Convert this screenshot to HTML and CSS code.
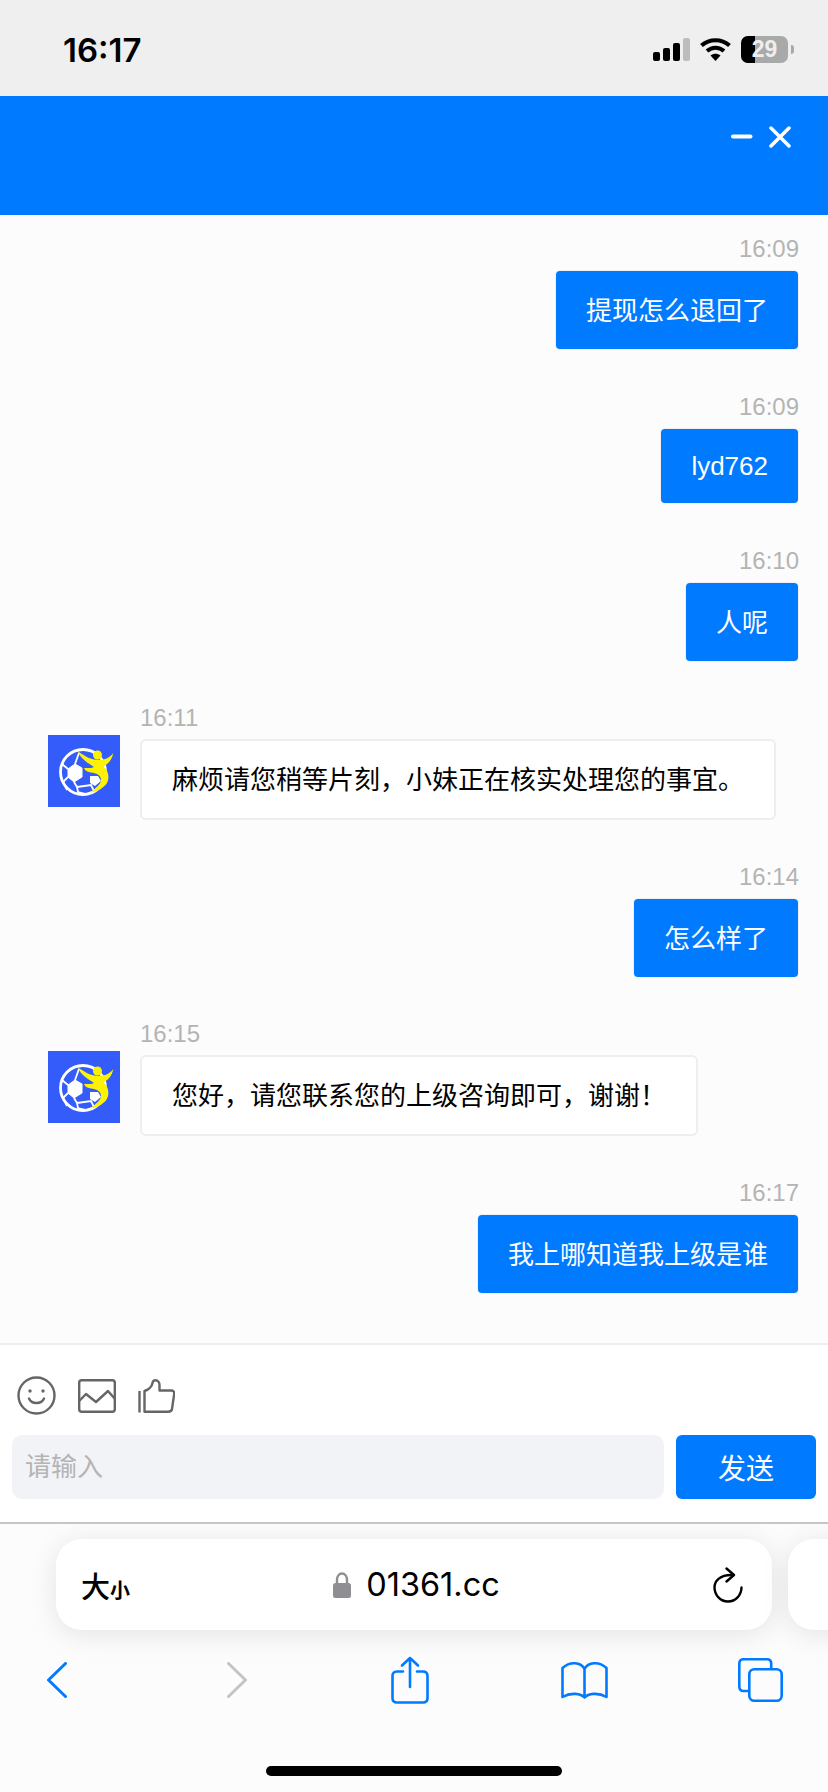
FILE: index.html
```html
<!DOCTYPE html>
<html lang="zh-CN">

<head>
    <meta charset="UTF-8">
    <meta name="viewport" content="width=device-width, initial-scale=1.0">
    <title>客服</title>
    <link rel="stylesheet" href="styles.css">
</head>

<body>
    <!-- Status bar -->
    <div class="status-bar">
        <span class="clock">16:17</span>
        <div class="status-icons">
            <svg width="37" height="23" viewBox="0 0 37 23">
                <rect x="0" y="14" width="7" height="9" rx="2" fill="#000"/>
                <rect x="10" y="10" width="7" height="13" rx="2" fill="#000"/>
                <rect x="20" y="5" width="7" height="18" rx="2" fill="#000"/>
                <rect x="30" y="0" width="7" height="23" rx="2" fill="#bdbdbd"/>
            </svg>
            <svg width="31" height="23" viewBox="0 0 31 23">
                <path d="M1.500 7.500C9.500 0.500 21.500 0.500 29.500 7.500" fill="none" stroke="#000" stroke-width="4.200"/>
                <path d="M7 13C12 8.600 19 8.600 24 13" fill="none" stroke="#000" stroke-width="4"/>
                <path d="M10.500 17.500C13.500 15 17.500 15 20.500 17.500L15.500 23Z" fill="#000"/>
            </svg>
            <div class="battery">
                <div class="battery-body"><div class="battery-fill"></div><span>29</span></div>
                <div class="battery-tip"></div>
            </div>
        </div>
    </div>

    <!-- Chat header -->
    <header class="chat-header">
        <svg width="60" height="22" viewBox="0 0 60 22">
            <path d="M2 10.500H19.500" stroke="#fff" stroke-width="4" stroke-linecap="round"/>
            <path d="M40 2L58 20M58 2L40 20" stroke="#fff" stroke-width="3.500" stroke-linecap="round"/>
        </svg>
    </header>

    <!-- Messages -->
    <main class="messages">
        <div class="msg msg-me gap-lg">
            <div class="msg-time">16:09</div>
            <div class="bubble">提现怎么退回了</div>
        </div>
        <div class="msg msg-me gap-lg">
            <div class="msg-time">16:09</div>
            <div class="bubble bubble-latin">lyd762</div>
        </div>
        <div class="msg msg-me gap-sm">
            <div class="msg-time">16:10</div>
            <div class="bubble">人呢</div>
        </div>
        <div class="msg msg-them">
            <svg class="avatar" viewBox="0 0 72 72"><use href="#logo"/></svg>
            <div class="msg-body">
                <div class="msg-time">16:11</div>
                <div class="bubble">麻烦请您稍等片刻，小妹正在核实处理您的事宜。</div>
            </div>
        </div>
        <div class="msg msg-me gap-sm">
            <div class="msg-time">16:14</div>
            <div class="bubble">怎么样了</div>
        </div>
        <div class="msg msg-them">
            <svg class="avatar" viewBox="0 0 72 72"><use href="#logo"/></svg>
            <div class="msg-body">
                <div class="msg-time">16:15</div>
                <div class="bubble">您好，请您联系您的上级咨询即可，谢谢！</div>
            </div>
        </div>
        <div class="msg msg-me">
            <div class="msg-time">16:17</div>
            <div class="bubble">我上哪知道我上级是谁</div>
        </div>
    </main>

    <!-- Composer -->
    <section class="composer">
        <div class="composer-tools">
            <svg width="39" height="39" viewBox="0 0 39 39" fill="none" stroke="#666" stroke-width="2.400">
                <circle cx="19.500" cy="19.500" r="18"/>
                <circle cx="13" cy="15" r="1.700" fill="#666" stroke="none"/>
                <circle cx="26" cy="15" r="1.700" fill="#666" stroke="none"/>
                <path d="M12 22.500C14.500 28.500 24.500 28.500 27 22.500" stroke-linecap="round"/>
            </svg>
            <svg width="38" height="34" viewBox="0 0 38 34" fill="none" stroke="#666" stroke-width="2.400">
                <rect x="1.200" y="1.200" width="35.600" height="31.600" rx="2.500"/>
                <path d="M1.200 22L8 15L18 23L30 12L37 20" stroke-linejoin="round"/>
            </svg>
            <svg width="37" height="34" viewBox="0 0 37 34" fill="none" stroke="#666" stroke-width="2.400">
                <path d="M1.500 12V33.500"/>
                <path d="M6.500 12C10 11 14 8 14.500 4C14.800 2 16 1.200 17.500 1.200C20 1.200 21.500 3.500 21.500 6V11.500H33C35.500 11.500 36.500 13 36.200 15L34 30C33.700 32 32.500 32.800 30 32.800H6.500Z" stroke-linejoin="round"/>
            </svg>
        </div>
        <div class="composer-input">
            <div class="input-box">请输入</div>
            <button class="send-button">发送</button>
        </div>
    </section>

    <!-- Safari bars -->
    <footer class="browser-bar">
        <div class="url-row">
            <div class="url-pill">
                <span class="text-size">大<small>小</small></span>
                <div class="url-host">
                    <svg width="18" height="26" viewBox="0 0 18 26">
                        <path d="M4 12V7.500C4 4.500 6 1.500 9 1.500C12 1.500 14 4.500 14 7.500V12" fill="none" stroke="#8e8e93" stroke-width="2.400"/>
                        <rect x="0" y="11" width="18" height="15" rx="2.500" fill="#8e8e93"/>
                    </svg>
                    <span>01361.cc</span>
                </div>
                <svg class="reload" width="30" height="36" viewBox="0 0 30 36" fill="none" stroke="#000" stroke-width="2.400">
                    <path d="M28.500 20.500C28.500 28 22.500 34.500 15 34.500C7.500 34.500 1.500 28 1.500 20.500C1.500 13.500 7.500 8 18 8" stroke-linecap="round"/>
                    <path d="M13.500 1.500L21 8L13.500 14.500" stroke-linecap="round" stroke-linejoin="round"/>
                </svg>
            </div>
            <div class="url-pill-next"></div>
        </div>
        <nav class="toolbar">
            <svg width="20" height="36" viewBox="0 0 20 36" fill="none" stroke="#007aff" stroke-width="3" stroke-linecap="round" stroke-linejoin="round">
                <path d="M18.500 1.500L1.500 18L18.500 34.500"/>
            </svg>
            <svg class="tool-forward" width="20" height="36" viewBox="0 0 20 36" fill="none" stroke="#c4c4c6" stroke-width="3" stroke-linecap="round" stroke-linejoin="round">
                <path d="M1.500 1.500L18.500 18L1.500 34.500"/>
            </svg>
            <svg class="tool-share" width="38" height="48" viewBox="0 0 38 48" fill="none" stroke="#007aff" stroke-width="2.600" stroke-linecap="round" stroke-linejoin="round">
                <path d="M19 31V2M11 9.500L19 2L27 9.500"/>
                <path d="M12 15.500H6C3 15.500 1.500 17 1.500 20V42C1.500 45 3 46.500 6 46.500H32C35 46.500 36.500 45 36.500 42V20C36.500 17 35 15.500 32 15.500H26"/>
            </svg>
            <svg class="tool-book" width="47" height="39" viewBox="0 0 47 39" fill="none" stroke="#007aff" stroke-width="2.600" stroke-linecap="round" stroke-linejoin="round">
                <path d="M23.500 8V36.500C20 32.500 10 31 1.500 36V7C9 0 20 1 23.500 8C27 1 38 0 45.500 7V36C37 31 27 32.500 23.500 36.500"/>
            </svg>
            <svg class="tool-tabs" width="45" height="44" viewBox="0 0 45 44" fill="none" stroke="#007aff" stroke-width="2.600">
                <path d="M10.500 33H5.500C2.800 33 1.300 31.500 1.300 28.500V5.500C1.300 2.800 2.800 1.300 5.500 1.300H29C31.700 1.300 33.200 2.800 33.200 5.500V10.500"/>
                <rect x="11.300" y="11.300" width="32.400" height="31.400" rx="5"/>
            </svg>
        </nav>
        <div class="home-indicator"></div>
    </footer>

    <!-- Logo used by the avatars -->
    <svg class="defs" width="0" height="0">
        <symbol id="logo" viewBox="0 0 72 72">
            <rect width="72" height="72" fill="#335cfa"/>
            <circle cx="35" cy="37" r="22.500" fill="#335cfa" stroke="#fff" stroke-width="2.800"/>
            <path d="M20 34L27 29L34 33L34 42L26 47L20 42Z" fill="#fff" stroke="#fff" stroke-linejoin="round"/>
            <path d="M27 29L31 18M20 34L14 29M20 42L15 47L19 55M26 47L29 52M29 52L43 50L46 56L38 59L30 57Z" fill="none" stroke="#fff" stroke-width="1.800"/>
            <path d="M42 41L50 41L53 46L47 51L42 48Z" fill="#fff"/>
            <path d="M29.700 16C34 19 39 23 46 24.500C54 26 61 24 65.300 18C64 25 60 29 55.500 31.500C61 36 62 44 58 49.500C54 54 48 57 42 57.500C48 53 53 49 53 45C53 40 48 38 43 37.500C40 37 37 36 36 33C39 33 43 33.500 46 32C42 29 33 25 29.700 16Z" fill="#fdf300"/>
            <circle cx="49.500" cy="20" r="4.500" fill="#fdf300"/>
        </symbol>
    </svg>
</body>

</html>
```

FILE: styles.css
```css
* {
    box-sizing: border-box;
}

html,
body {
    height: 100%;
}

body {
    margin: 0;
    display: flex;
    flex-direction: column;
    overflow: hidden;
    background-color: #fcfcfc;
    color: #000;
    font-family: "Liberation Sans", "Noto Sans CJK SC", sans-serif;
}

svg {
    display: block;
    flex-shrink: 0;
}

.defs {
    position: absolute;
}

/* Status bar */
.status-bar {
    height: 96px;
    flex-shrink: 0;
    display: flex;
    align-items: center;
    justify-content: space-between;
    padding: 3px 34px 0 63px;
    background-color: #efefef;
}

.clock {
    font-family: Inter, sans-serif;
    font-size: 33px;
    font-weight: 600;
}

.status-icons {
    display: flex;
    align-items: center;
    gap: 10px;
}

.battery {
    display: flex;
    align-items: center;
    gap: 3px;
}

.battery-body {
    position: relative;
    width: 47px;
    height: 27px;
    overflow: hidden;
    border-radius: 7px;
    background-color: #a9a9a9;
    color: #eee;
    font-size: 23px;
    font-weight: bold;
    line-height: 27px;
    text-align: center;
}

.battery-fill {
    position: absolute;
    left: 0;
    top: 0;
    bottom: 0;
    width: 14px;
    background-color: #000;
}

.battery-body span {
    position: relative;
}

.battery-tip {
    width: 3px;
    height: 9px;
    border-radius: 0 3px 3px 0;
    background-color: #a9a9a9;
}

/* Chat header */
.chat-header {
    height: 119px;
    flex-shrink: 0;
    display: flex;
    justify-content: flex-end;
    padding: 30px 37px 0 0;
    background-color: #007aff;
}

/* Messages */
.messages {
    flex: 1;
    padding: 20px 30px 0 48px;
    overflow: hidden;
}

.msg {
    margin-bottom: 43px;
}

.msg.gap-lg {
    margin-bottom: 44px;
}

.msg.gap-sm {
    margin-bottom: 42px;
}

.msg-me {
    display: flex;
    flex-direction: column;
    align-items: flex-end;
}

.msg-them {
    display: flex;
    align-items: flex-start;
    gap: 20px;
}

.avatar {
    width: 72px;
    height: 72px;
    margin-top: 32px;
}

.msg-time {
    height: 28px;
    margin-bottom: 8px;
    color: #b4b4b4;
    font-size: 24px;
    line-height: 28px;
}

.msg-me .msg-time {
    margin-right: -1px;
}

.msg-them .msg-time {
    line-height: 30px;
}

.bubble {
    padding: 0 30px;
    height: 78px;
    border-radius: 4px;
    background-color: #007aff;
    box-shadow: 0 0 0 1px #f0f0f0;
    color: #fff;
    font-size: 26px;
    line-height: 80px;
}

.bubble-latin {
    height: 74px;
    line-height: 74px;
}

.msg-them .bubble {
    height: 81px;
    border: 2px solid #eeeeee;
    border-radius: 6px;
    background-color: #fff;
    box-shadow: none;
    color: #000;
    line-height: 79px;
}

/* Composer */
.composer {
    height: 181px;
    flex-shrink: 0;
    border-top: 2px solid #eeeeee;
    border-bottom: 2px solid #c6c6c6;
    padding: 31px 12px 0;
    background-color: #fff;
}

.composer-tools {
    display: flex;
    align-items: center;
    gap: 22px;
    height: 39px;
    padding-left: 5px;
}

.composer-input {
    display: flex;
    gap: 12px;
    margin-top: 20px;
}

.input-box {
    flex: 1;
    height: 64px;
    padding-left: 13px;
    border-radius: 10px;
    background-color: #f2f3f7;
    color: #b4b4b4;
    font-size: 26px;
    line-height: 64px;
}

.send-button {
    width: 140px;
    height: 64px;
    border: none;
    border-radius: 6px;
    background-color: #007aff;
    color: #fff;
    font-family: inherit;
    font-size: 28px;
}

/* Safari bars */
.browser-bar {
    position: relative;
    height: 268px;
    flex-shrink: 0;
    padding-top: 15px;
    overflow: hidden;
    background-color: #fcfcfc;
}

.url-row {
    display: flex;
    gap: 16px;
    padding-left: 56px;
}

.url-pill,
.url-pill-next {
    height: 91px;
    flex-shrink: 0;
    border-radius: 26px;
    background-color: #fff;
    box-shadow: 0 4px 28px rgba(0, 0, 0, 0.1);
}

.url-pill {
    width: 716px;
    display: flex;
    align-items: center;
    justify-content: space-between;
    padding: 0 29px 0 25px;
}

.url-pill-next {
    width: 80px;
}

.text-size {
    font-size: 29px;
    font-weight: 500;
}

.text-size small {
    font-size: 20px;
    font-weight: bold;
}

.url-host {
    display: flex;
    align-items: center;
    gap: 15px;
    margin-right: 10px;
    font-family: Inter, sans-serif;
    font-size: 32.500px;
}

.toolbar {
    display: flex;
    align-items: center;
    height: 50px;
    margin-top: 25px;
    padding-left: 47px;
}

.tool-forward {
    margin-left: 160px;
}

.tool-share {
    margin-left: 144px;
}

.tool-book {
    margin-left: 132px;
}

.tool-tabs {
    margin-left: 130px;
}

.home-indicator {
    position: absolute;
    left: 266px;
    bottom: 16px;
    width: 296px;
    height: 10px;
    border-radius: 5px;
    background-color: #000;
}
```
